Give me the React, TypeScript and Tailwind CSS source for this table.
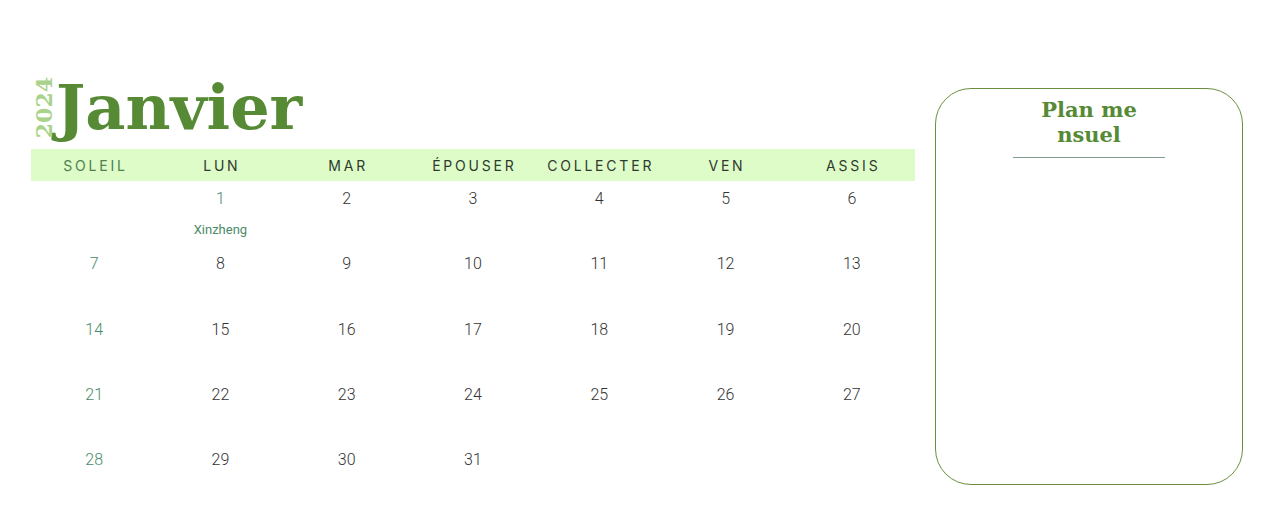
import React from 'react';

const days = ['SOLEIL', 'LUN', 'MAR', 'ÉPOUSER', 'COLLECTER', 'VEN', 'ASSIS'];

const weeks: (number | null)[][] = [
  [null, 1, 2, 3, 4, 5, 6],
  [7, 8, 9, 10, 11, 12, 13],
  [14, 15, 16, 17, 18, 19, 20],
  [21, 22, 23, 24, 25, 26, 27],
  [28, 29, 30, 31, null, null, null],
];

const App: React.FC = () => {
  return (
    <div className="w-[1280px] h-[522px] bg-white flex font-['Inter',sans-serif]">
      {/* Calendar */}
      <div className="ml-[31px] w-[884px] pt-[74px]">
        <div className="flex items-end h-[75px] pb-[11px]">
          <span className="[writing-mode:vertical-rl] rotate-180 font-['DejaVu_Serif',serif] font-bold text-[22px] leading-[19px] text-[#a9d38a] ml-[4px]">
            2024
          </span>
          <h1 className="font-['DejaVu_Serif',serif] font-bold text-[62px] leading-[60px] text-[#568a35] ml-[2px]">
            Janvier
          </h1>
        </div>

        <div className="grid grid-cols-7 bg-[#ddfcc8] h-[32px] items-center">
          {days.map((d, i) => (
            <div
              key={d}
              className={`text-center text-[14px] tracking-[0.2em] pl-[0.2em] ${i === 0 ? 'text-[#4f8150]' : 'text-[#2f3a2f]'}`}
            >
              {d}
            </div>
          ))}
        </div>

        <div>
          {weeks.map((week, wi) => (
            <div key={wi} className="grid grid-cols-7 h-[65.3px]">
              {week.map((n, di) => (
                <div key={di} className="flex flex-col items-center pt-[8px]">
                  {n !== null && (
                    <span className={`font-['Roboto',sans-serif] font-light text-[16px] leading-[20px] ${di === 0 || n === 1 ? 'text-[#4a8a68]' : 'text-[#333333]'}`}>
                      {n}
                    </span>
                  )}
                  {n === 1 && (
                    <span className="mt-[13px] font-['Roboto',sans-serif] text-[13px] leading-[16px] text-[#4a8a68]">Xinzheng</span>
                  )}
                </div>
              ))}
            </div>
          ))}
        </div>
      </div>

      {/* Monthly plan */}
      <div className="ml-[20px] mt-[88px] w-[308px] h-[397px] border border-[#6b8f3f] rounded-[36px] flex flex-col items-center pt-[8px]">
        <div className="font-['DejaVu_Serif',serif] font-bold text-[21px] leading-[25px] text-[#568a35] text-center">
          <span className="block">Plan me</span>
          <span className="block">nsuel</span>
        </div>
        <div className="mt-[10px] w-[152px] h-px bg-[#7f9f8c]" />
      </div>
    </div>
  );
};

export default App;
